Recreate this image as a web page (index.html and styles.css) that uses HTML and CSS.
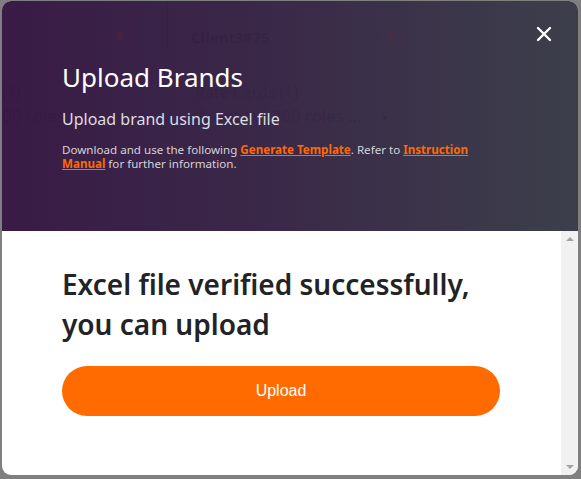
FILE: index.html
```html
<!DOCTYPE html>
<html lang="en">
<head>
  <meta charset="UTF-8" />
  <title>Upload Brands</title>
  <link rel="stylesheet" href="styles.css">
</head>
<body>
  <div class="modal">
    <div class="modal-header">
      <!-- page behind the dialog showing through -->
      <div class="ghost">
        <span class="ghost-line"></span>
        <span class="ghost-icon ghost-icon-left"></span>
        <span class="ghost-client">Client3875</span>
        <span class="ghost-icon ghost-icon-right"></span>
        <span class="ghost-label">Rate Cards (1)</span>
        <span class="ghost-select">Asset UK 200 roles ... <i>&#9662;</i></span>
        <span class="ghost-left-label">(1)</span>
        <span class="ghost-left-select">00 roles</span>
      </div>

      <button class="close-btn" aria-label="Close">
        <svg width="16" height="16" viewBox="0 0 16 16">
          <path d="M2 2 L14 14 M14 2 L2 14" stroke="#fff" stroke-width="2.4" stroke-linecap="round" fill="none"/>
        </svg>
      </button>

      <h2 class="title">Upload Brands</h2>
      <p class="subtitle">Upload brand using Excel file</p>
      <p class="help">Download and use the following <a href="#">Generate Template</a>. Refer to <a href="#">Instruction Manual</a> for further information.</p>
    </div>

    <div class="modal-body">
      <div class="body-content">
        <h3 class="status">Excel file verified successfully, you can upload</h3>
        <button class="upload-btn">Upload</button>
      </div>
      <div class="scrollbar">
        <span class="arrow arrow-up"></span>
        <span class="arrow arrow-down"></span>
      </div>
    </div>
  </div>
</body>
</html>
```

FILE: styles.css
```css
html, body {
  margin: 0;
  padding: 0;
}
body {
  background: #7f7f7f;
  font-family: "Noto Sans", "Open Sans", sans-serif;
  height: 479px;
  overflow: hidden;
}
.modal {
  margin: 1px 3px 0 2px;
  height: 474px;
  border-radius: 9px;
  overflow: hidden;
  display: flex;
  flex-direction: column;
  background: #fff;
}
.modal-header {
  position: relative;
  height: 230px;
  flex: none;
  box-sizing: border-box;
  padding: 59px 0 0 60px;
  background: linear-gradient(90deg, #391b46 0%, #3a2848 45%, #3c3f4b 100%);
  color: #fff;
}
.ghost {
  position: absolute;
  inset: 0;
  pointer-events: none;
  color: rgba(20, 10, 25, 0.12);
  font-family: "Open Sans", sans-serif;
}
.ghost span {
  position: absolute;
  white-space: nowrap;
}
.ghost-line {
  left: 165px;
  top: 0;
  width: 1px;
  height: 50px;
  background: rgba(0, 0, 0, 0.05);
}
.ghost-icon {
  top: 23px;
  width: 24px;
  height: 24px;
  border-radius: 50%;
  border: 1px solid rgba(120, 20, 50, 0.14);
}
.ghost-icon::after {
  content: "";
  position: absolute;
  left: 10px;
  top: 7px;
  width: 5px;
  height: 9px;
  background: rgba(140, 20, 50, 0.18);
}
.ghost-icon-left { left: 105px; }
.ghost-icon-right { left: 376px; }
.ghost-client {
  left: 189px;
  top: 26px;
  font-size: 15px;
  font-weight: 700;
}
.ghost-label {
  left: 193px;
  top: 80px;
  font-size: 16px;
}
.ghost-select {
  left: 195px;
  top: 103px;
  font-size: 17px;
}
.ghost-select i {
  font-style: normal;
  font-size: 12px;
  margin-left: 16px;
}
.ghost-left-label {
  left: 0;
  top: 80px;
  font-size: 16px;
}
.ghost-left-select {
  left: 0;
  top: 103px;
  font-size: 17px;
}
.close-btn {
  position: absolute;
  right: 26px;
  top: 25px;
  background: none;
  border: none;
  padding: 0;
  cursor: pointer;
}
.title {
  position: relative;
  margin: 0;
  font-size: 26px;
  font-weight: 400;
  line-height: 34px;
}
.subtitle {
  position: relative;
  margin: 14px 0 0;
  font-size: 16px;
  line-height: 22px;
  color: #dddde2;
}
.help {
  position: relative;
  margin: 13px 0 0;
  font-size: 11.6px;
  line-height: 14px;
  color: #d4d2d9;
  max-width: 432px;
}
.help a {
  color: #ff6a00;
  font-weight: 700;
}
.modal-body {
  flex: 1;
  display: flex;
  min-height: 0;
}
.body-content {
  flex: 1;
  padding: 33px 0 0 60px;
}
.status {
  margin: 0;
  width: 425px;
  font-size: 28px;
  font-weight: 600;
  line-height: 40px;
  color: #222326;
}
.upload-btn {
  display: block;
  margin-top: 22px;
  width: 438px;
  height: 50px;
  border: none;
  border-radius: 25px;
  background: #ff6b00;
  color: #fff;
  font-family: "Liberation Sans", Arial, sans-serif;
  font-size: 16px;
  cursor: pointer;
}
.scrollbar {
  width: 17px;
  flex: none;
  background: #f1f1f1;
  display: flex;
  flex-direction: column;
  justify-content: space-between;
  align-items: center;
  padding: 6px 0;
}
.arrow {
  width: 0;
  height: 0;
  border-left: 4px solid transparent;
  border-right: 4px solid transparent;
}
.arrow-up { border-bottom: 4px solid #a3a3a3; }
.arrow-down { border-top: 4px solid #a3a3a3; }
```
